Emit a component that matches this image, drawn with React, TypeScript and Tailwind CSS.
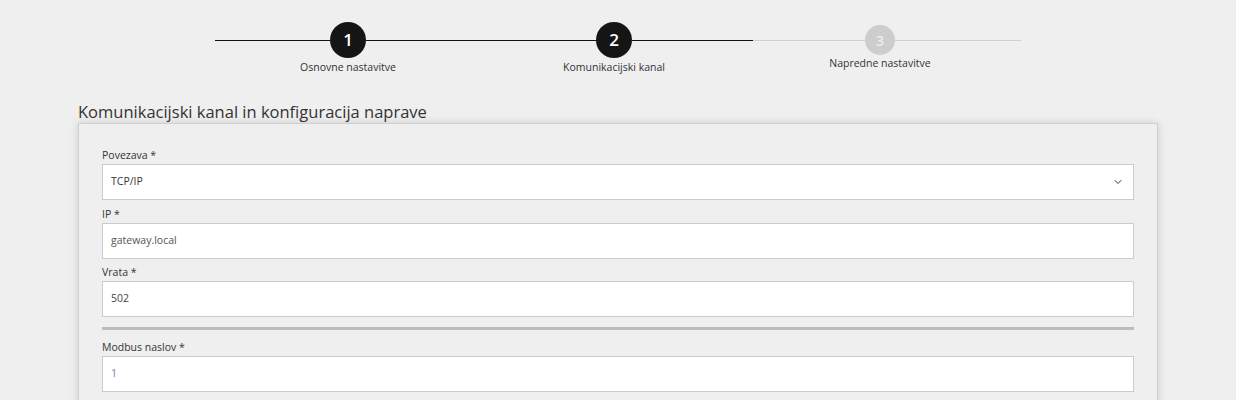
import React from 'react';
import { ChevronDown } from 'lucide-react';

const steps = [
  { n: 1, label: 'Osnovne nastavitve', done: true },
  { n: 2, label: 'Komunikacijski kanal', done: true },
  { n: 3, label: 'Napredne nastavitve', done: false },
];

function Field({ label, value, valueClass = 'text-[#444]', select = false }: { label: string; value: string; valueClass?: string; select?: boolean }) {
  return (
    <div className="flex flex-col">
      <label className="text-[10.5px] leading-[17px] text-[#333]">{label}</label>
      <div className="h-9 bg-white border border-[#ccc] flex items-center justify-between pl-[8px] pr-[9px]">
        <span className={`text-[10.5px] ${valueClass}`}>{value}</span>
        {select && <ChevronDown className="w-[12px] h-[12px] text-[#333]" strokeWidth={2} />}
      </div>
    </div>
  );
}

export default function App() {
  return (
    <div className="min-h-[400px] bg-[#efefef] font-['Open_Sans',sans-serif] text-[#333]">
      {/* stepper */}
      <div className="pt-[22px] pl-[215px]">
        <div className="flex items-center h-[36px]">
          <div className="w-[115px] h-px bg-[#111]" />
          <div className="w-9 h-9 rounded-full bg-[#151515] text-white flex items-center justify-center text-[17px] font-semibold">1</div>
          <div className="w-[230px] h-px bg-[#111]" />
          <div className="w-9 h-9 rounded-full bg-[#151515] text-white flex items-center justify-center text-[17px] font-semibold">2</div>
          <div className="w-[121px] h-px bg-[#111]" />
          <div className="w-[112px] h-px bg-[#d0d0d0]" />
          <div className="w-[30px] h-[30px] rounded-full bg-[#cdcdcd] text-[#ececec] flex items-center justify-center text-[14px] font-semibold">3</div>
          <div className="w-[126px] h-px bg-[#d0d0d0]" />
        </div>
        <div className="flex">
          {steps.map(s => (
            <div key={s.n} className={`w-[266px] text-center text-[10.5px] leading-[14px] text-[#333] ${s.done ? 'mt-[2px]' : 'mt-[-2px]'}`}>
              {s.label}
            </div>
          ))}
        </div>
      </div>

      {/* section */}
      <div className="pl-[78px] pr-[78px] mt-[27px]">
        <h2 className="text-[16.5px] leading-[22px] text-[#333]">Komunikacijski kanal in konfiguracija naprave</h2>
        <div className="w-[1080px] border border-[#cfcfcf] shadow-[0_0_8px_rgba(0,0,0,0.14)] px-[23px] pt-[23px] pb-[30px] min-h-[290px]">
          <div className="flex flex-col gap-[5.5px]">
            <Field label="Povezava *" value="TCP/IP" valueClass="text-[#333]" select />
            <Field label="IP *" value="gateway.local" valueClass="text-[#555]" />
            <Field label="Vrata *" value="502" valueClass="text-[#444]" />
          </div>
          <div className="h-[3px] bg-[#bcbcbc] mt-[10px] mb-[9px]" />
          <Field label="Modbus naslov *" value="1" valueClass="text-[#5f84a6]" />
        </div>
      </div>
    </div>
  );
}
